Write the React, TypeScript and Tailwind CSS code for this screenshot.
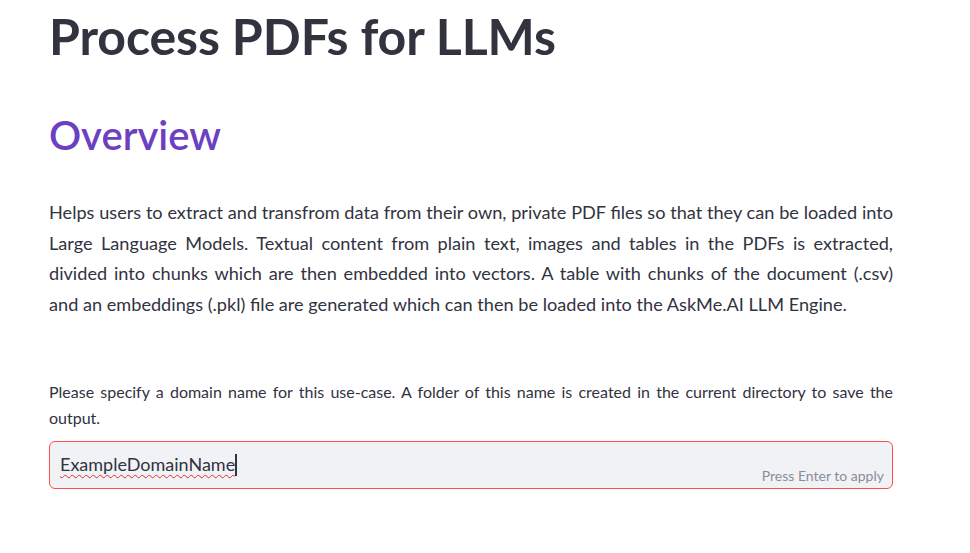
import React from "react";

export default function App() {
  const para = [
    "Helps users to extract and transfrom data from their own, private PDF files so that they can be loaded into",
    "Large Language Models. Textual content from plain text, images and tables in the PDFs is extracted,",
    "divided into chunks which are then embedded into vectors. A table with chunks of the document (.csv)",
  ];
  return (
    <div className="w-[970px] h-[553px] bg-white overflow-hidden font-['Lato',sans-serif] text-[#31333F]">
      <div className="ml-[49px] w-[844px] flex flex-col">
        <h1 className="mt-[6px] text-[50px] leading-[60px] font-bold tracking-[-0.1px] text-[#31333F]">
          Process PDFs for LLMs
        </h1>
        <h2 className="mt-[45px] text-[40px] leading-[48px] font-semibold text-[#6d3fc1]">
          Overview
        </h2>
        <div className="mt-[38px] text-[18.15px] leading-[30.7px]">
          {para.map((l) => (
            <div key={l} className="text-justify [text-align-last:justify] whitespace-nowrap">
              {l}
            </div>
          ))}
          <div>
            and an embeddings (.pkl) file are generated which can then be loaded into the AskMe.AI LLM Engine.
          </div>
        </div>
        <div className="mt-[59px] text-[16px] leading-[26px]">
          <div className="text-justify [text-align-last:justify]">
            Please specify a domain name for this use-case. A folder of this name is created in the current directory to save the
          </div>
          <div>output.</div>
        </div>
        <div className="mt-[10px] relative h-[48px] rounded-[6px] border border-[#ff4b4b] bg-[#f0f2f6] flex items-center">
          <span className="ml-[10px] text-[18px] text-[#31333F] underline decoration-wavy decoration-[#e03030] decoration-[1px] underline-offset-[3px]">
            ExampleDomainName
          </span>
          <span className="w-[2px] h-[22px] bg-[#31333F]" />
          <span className="absolute right-[8px] bottom-[2px] text-[14px] text-[#8b8d96]">
            Press Enter to apply
          </span>
        </div>
      </div>
    </div>
  );
}
